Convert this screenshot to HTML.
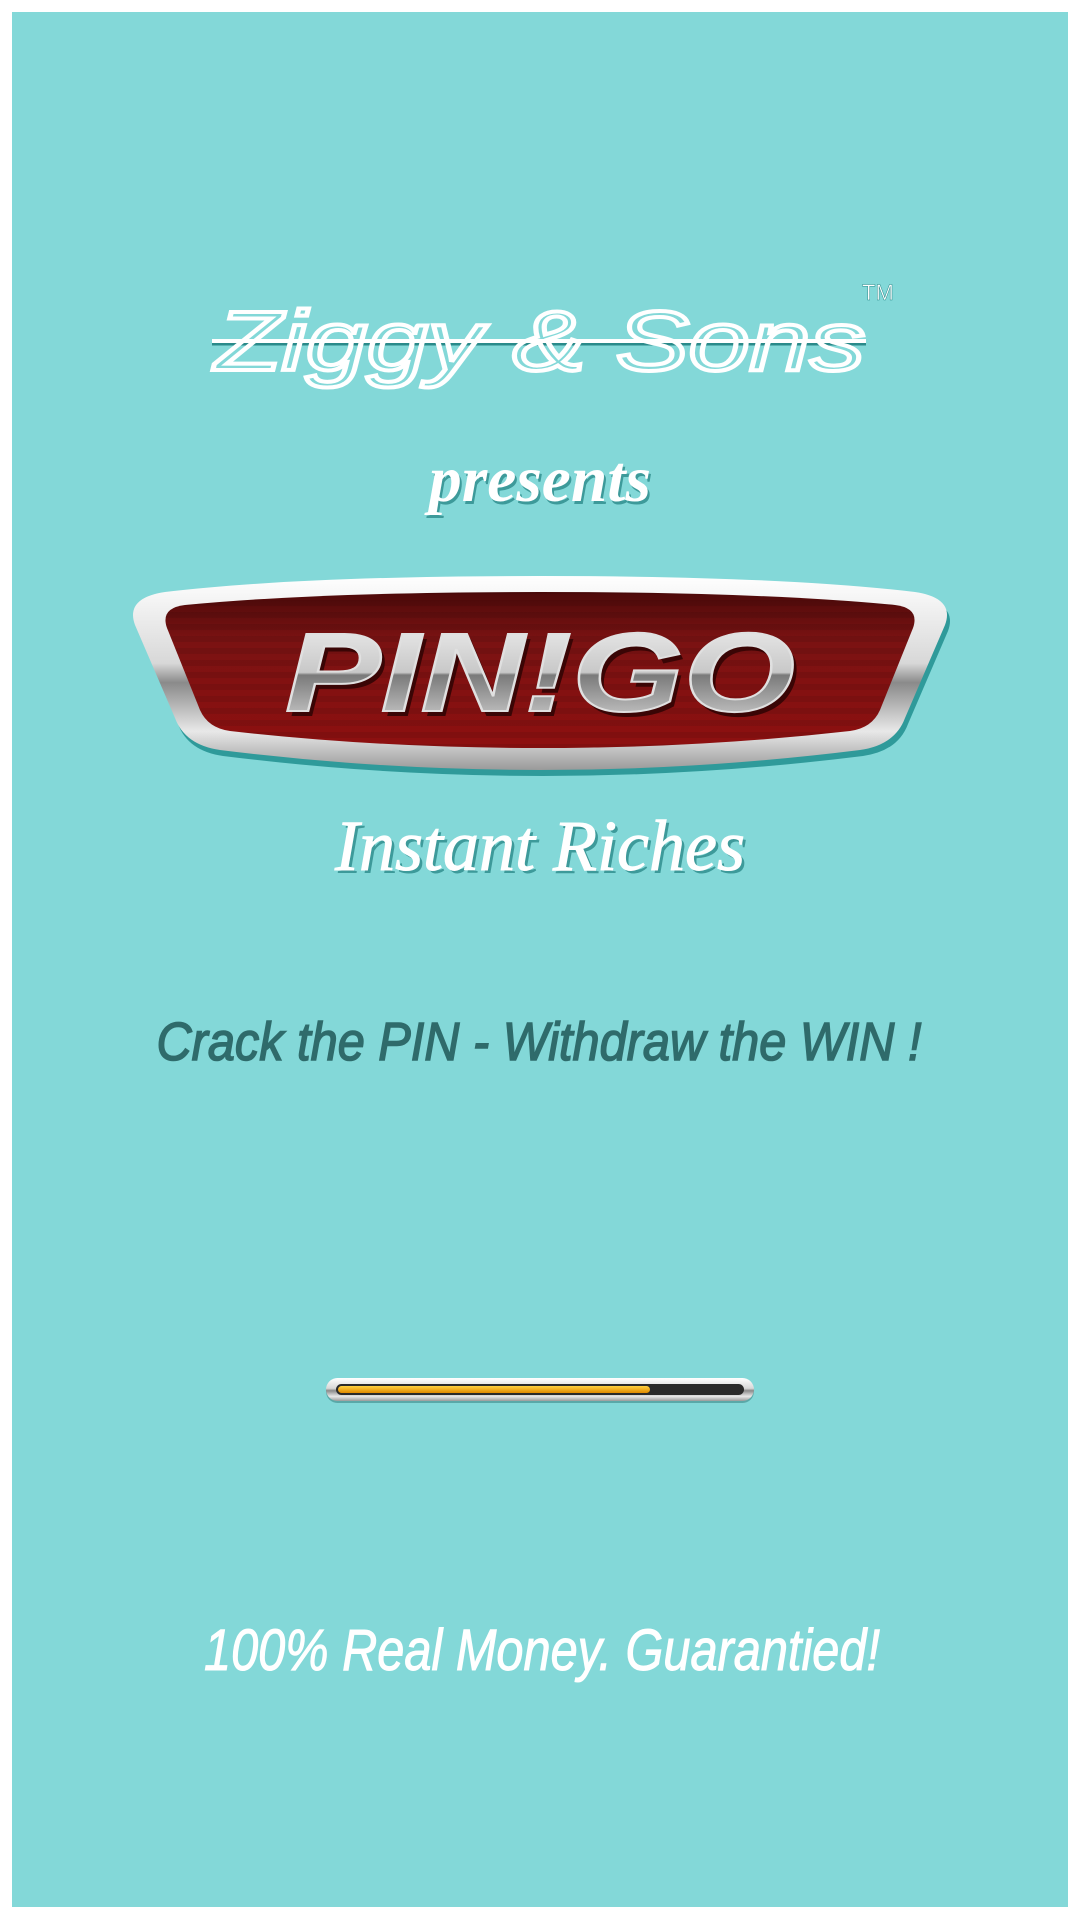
<!DOCTYPE html>
<html><head><meta charset="utf-8"><style>
html,body{margin:0;padding:0;background:#fff;}
svg{display:block}
</style></head><body>
<svg width="1080" height="1921" viewBox="0 0 1080 1921" xmlns="http://www.w3.org/2000/svg">
<defs>
<linearGradient id="chrome" x1="0" y1="0" x2="0" y2="1">
<stop offset="0" stop-color="#ffffff"/><stop offset="0.45" stop-color="#d8d8d8"/><stop offset="0.55" stop-color="#8a8a8a"/><stop offset="0.8" stop-color="#e8e8e8"/><stop offset="1" stop-color="#9a9a9a"/>
</linearGradient>
<linearGradient id="red" x1="0" y1="0" x2="0" y2="1">
<stop offset="0" stop-color="#4e0a0a"/><stop offset="0.3" stop-color="#7a1212"/><stop offset="1" stop-color="#8e1010"/>
</linearGradient>
<linearGradient id="txt" x1="0" y1="0" x2="0" y2="1">
<stop offset="0" stop-color="#f4f4f4"/><stop offset="0.5" stop-color="#c8c8c8"/><stop offset="0.52" stop-color="#7a7a7a"/><stop offset="1" stop-color="#e0e0e0"/>
</linearGradient>
<pattern id="stripes" width="10" height="12" patternUnits="userSpaceOnUse"><rect width="10" height="6" fill="#000" opacity="0.08"/></pattern>
<linearGradient id="orange" x1="0" y1="0" x2="0" y2="1"><stop offset="0" stop-color="#ffd040"/><stop offset="1" stop-color="#e08a00"/></linearGradient>
</defs>
<rect x="12" y="12" width="1056" height="1895" fill="#83d8d8"/>

<line x1="212" y1="344" x2="866" y2="344" stroke="#2a8a8a" stroke-width="3"/>
<line x1="212" y1="341" x2="866" y2="341" stroke="#fff" stroke-width="4"/>
<text x="540" y="370" text-anchor="middle" font-family="'Liberation Sans',sans-serif" font-size="84" font-style="italic" fill="none" stroke="#fff" stroke-width="4" textLength="650" lengthAdjust="spacingAndGlyphs">Ziggy &amp; Sons</text>
<text x="862" y="300" font-family="'Liberation Sans',sans-serif" font-size="22" fill="#fff" stroke="#2a8a8a" stroke-width="0.5">TM</text>

<text x="542" y="504" text-anchor="middle" font-family="'Liberation Serif',serif" font-style="italic" font-weight="bold" font-size="66" fill="#3d9a9a" textLength="222" lengthAdjust="spacingAndGlyphs">presents</text>
<text x="540" y="501" text-anchor="middle" font-family="'Liberation Serif',serif" font-style="italic" font-weight="bold" font-size="66" fill="#fff" textLength="222" lengthAdjust="spacingAndGlyphs">presents</text>

<path d="M165 592 Q300 576 540 576 Q780 576 915 592 Q955 598 945 625 L905 718 Q895 745 860 750 Q700 770 540 770 Q380 770 220 750 Q185 745 175 718 L135 625 Q125 598 165 592 Z" fill="#2f9a9a" transform="translate(3,6)"/>
<path d="M165 592 Q300 576 540 576 Q780 576 915 592 Q955 598 945 625 L905 718 Q895 745 860 750 Q700 770 540 770 Q380 770 220 750 Q185 745 175 718 L135 625 Q125 598 165 592 Z" fill="url(#chrome)"/>
<path d="M185 605 Q320 592 540 592 Q760 592 895 605 Q920 608 913 628 L880 710 Q872 728 850 731 Q700 748 540 748 Q380 748 230 731 Q208 728 200 710 L167 628 Q160 608 185 605 Z" fill="url(#red)"/>
<path d="M185 605 Q320 592 540 592 Q760 592 895 605 Q920 608 913 628 L880 710 Q872 728 850 731 Q700 748 540 748 Q380 748 230 731 Q208 728 200 710 L167 628 Q160 608 185 605 Z" fill="url(#stripes)"/>
<text x="544" y="716" text-anchor="middle" font-family="'Liberation Sans',sans-serif" font-style="italic" font-weight="bold" font-size="112" fill="#3a0505" textLength="510" lengthAdjust="spacingAndGlyphs">PIN!GO</text>
<text x="540" y="711" text-anchor="middle" font-family="'Liberation Sans',sans-serif" font-style="italic" font-weight="bold" font-size="112" fill="url(#txt)" stroke="#e0e0e0" stroke-width="2" textLength="510" lengthAdjust="spacingAndGlyphs">PIN!GO</text>

<text x="543" y="873" text-anchor="middle" font-family="'Liberation Serif',serif" font-style="italic" font-size="72" fill="#3d9a9a" textLength="410" lengthAdjust="spacingAndGlyphs">Instant Riches</text>
<text x="540" y="870" text-anchor="middle" font-family="'Liberation Serif',serif" font-style="italic" font-size="72" fill="#fff" stroke="#fff" stroke-width="1" textLength="410" lengthAdjust="spacingAndGlyphs">Instant Riches</text>

<text x="539" y="1060" text-anchor="middle" font-family="'Liberation Sans',sans-serif" font-style="italic" font-size="54" fill="#2f6b6b" stroke="#2f6b6b" stroke-width="1.5" textLength="765" lengthAdjust="spacingAndGlyphs">Crack the PIN - Withdraw the WIN !</text>

<rect x="326" y="1378" width="428" height="23" rx="11.5" fill="#5aa8a8" transform="translate(0,2)"/>
<rect x="326" y="1378" width="428" height="23" rx="11.5" fill="url(#chrome)"/>
<rect x="336" y="1384" width="408" height="11" rx="5.5" fill="#2a2a2a"/>
<rect x="338" y="1386" width="312" height="7" rx="3.5" fill="url(#orange)"/>

<text x="542" y="1670" text-anchor="middle" font-family="'Liberation Sans',sans-serif" font-style="italic" font-size="58" fill="#fff" stroke="#fff" stroke-width="1" textLength="676" lengthAdjust="spacingAndGlyphs">100% Real Money. Guarantied!</text>
</svg>
</body></html>
